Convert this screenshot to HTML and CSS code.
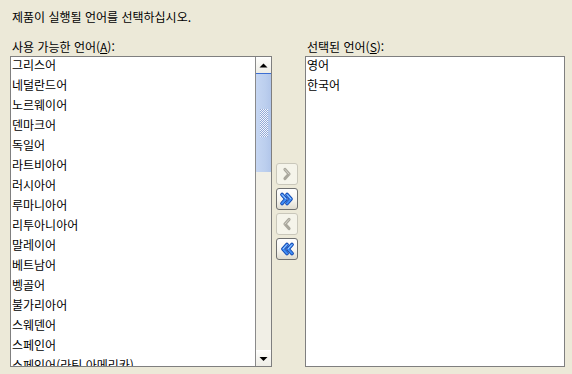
FILE: index.html
```html
<!DOCTYPE html>
<html lang="ko">
<head>
<meta charset="utf-8">
<link rel="stylesheet" href="styles.css">
</head>
<body>
<div class="page">
  <div class="prompt">제품이 실행될 언어를 선택하십시오.</div>
  <div class="panes">
    <div class="col left">
      <div class="label">사용 가능한 언어(<u>A</u>):</div>
      <div class="listbox">
        <ul class="items">
          <li>그리스어</li>
          <li>네덜란드어</li>
          <li>노르웨이어</li>
          <li>덴마크어</li>
          <li>독일어</li>
          <li>라트비아어</li>
          <li>러시아어</li>
          <li>루마니아어</li>
          <li>리투아니아어</li>
          <li>말레이어</li>
          <li>베트남어</li>
          <li>벵골어</li>
          <li>불가리아어</li>
          <li>스웨덴어</li>
          <li>스페인어</li>
          <li>스페인어(라틴 아메리카)</li>
        </ul>
        <div class="scrollbar">
          <div class="sb-btn">
            <svg width="15" height="15" viewBox="0 0 15 15"><polygon points="3.5,9.5 11.5,9.5 7.5,5.5" fill="#000"/></svg>
          </div>
          <div class="thumb"><div class="grip"></div></div>
          <div class="track"></div>
          <div class="sb-btn">
            <svg width="15" height="15" viewBox="0 0 15 15"><polygon points="3.5,6 11.5,6 7.5,10" fill="#000"/></svg>
          </div>
        </div>
      </div>
    </div>
    <div class="mid">
      <div class="mv-btn disabled">
        <svg width="20" height="20" viewBox="0 0 20 20"><polyline points="8,5.5 12,10 8,14.5" fill="none" stroke="#a9a79c" stroke-width="3.2" stroke-linecap="round" stroke-linejoin="round"/><polyline points="8,5.5 12,10" fill="none" stroke="#d6d4cb" stroke-width="1" stroke-linecap="round"/></svg>
      </div>
      <div class="mv-btn">
        <svg width="20" height="20" viewBox="0 0 20 20">
          <polyline points="5,5.5 9,10 5,14.5" fill="none" stroke="#0b3fa8" stroke-width="3.6" stroke-linecap="round" stroke-linejoin="round"/>
          <polyline points="10,5.5 14,10 10,14.5" fill="none" stroke="#0b3fa8" stroke-width="3.6" stroke-linecap="round" stroke-linejoin="round"/>
          <polyline points="5,5.5 9,10 5,14.5" fill="none" stroke="#3f8cf5" stroke-width="2" stroke-linecap="round" stroke-linejoin="round"/>
          <polyline points="10,5.5 14,10 10,14.5" fill="none" stroke="#3f8cf5" stroke-width="2" stroke-linecap="round" stroke-linejoin="round"/>
          <polyline points="5,5.5 9,10" fill="none" stroke="#bfe0ff" stroke-width="0.8"/>
          <polyline points="10,5.5 14,10" fill="none" stroke="#bfe0ff" stroke-width="0.8"/>
        </svg>
      </div>
      <div class="mv-btn disabled">
        <svg width="20" height="20" viewBox="0 0 20 20"><polyline points="12,5.5 8,10 12,14.5" fill="none" stroke="#a9a79c" stroke-width="3.2" stroke-linecap="round" stroke-linejoin="round"/><polyline points="12,5.5 8,10" fill="none" stroke="#d6d4cb" stroke-width="1" stroke-linecap="round"/></svg>
      </div>
      <div class="mv-btn">
        <svg width="20" height="20" viewBox="0 0 20 20">
          <polyline points="10,5.5 6,10 10,14.5" fill="none" stroke="#0b3fa8" stroke-width="3.6" stroke-linecap="round" stroke-linejoin="round"/>
          <polyline points="15,5.5 11,10 15,14.5" fill="none" stroke="#0b3fa8" stroke-width="3.6" stroke-linecap="round" stroke-linejoin="round"/>
          <polyline points="10,5.5 6,10 10,14.5" fill="none" stroke="#3f8cf5" stroke-width="2" stroke-linecap="round" stroke-linejoin="round"/>
          <polyline points="15,5.5 11,10 15,14.5" fill="none" stroke="#3f8cf5" stroke-width="2" stroke-linecap="round" stroke-linejoin="round"/>
          <polyline points="10,5.5 6,10" fill="none" stroke="#bfe0ff" stroke-width="0.8"/>
          <polyline points="15,5.5 11,10" fill="none" stroke="#bfe0ff" stroke-width="0.8"/>
        </svg>
      </div>
    </div>
    <div class="col right">
      <div class="label">선택된 언어(<u>S</u>):</div>
      <div class="listbox">
        <ul class="items">
          <li>영어</li>
          <li>한국어</li>
        </ul>
      </div>
    </div>
  </div>
</div>
</body>
</html>
```

FILE: styles.css
```css
html, body {
  margin: 0;
  background: #ece9d8;
}
body {
  font-family: "Noto Sans CJK KR", "Noto Sans", sans-serif;
  font-size: 12px;
  color: #000;
}
.page {
  padding: 10px 0 0 10px;
}
.prompt {
  height: 14px;
  line-height: 14px;
  padding-left: 2px;
  white-space: nowrap;
}
.panes {
  display: flex;
  margin-top: 16px;
}
.col {
  display: flex;
  flex-direction: column;
}
.left { width: 262px; }
.right { width: 260px; }
.label {
  height: 14px;
  line-height: 14px;
  padding-left: 2px;
  margin-bottom: 2px;
  white-space: nowrap;
}
.listbox {
  box-sizing: border-box;
  height: 311px;
  border: 1px solid #7f7f7f;
  background: #fff;
  display: flex;
  overflow: hidden;
}
.items {
  flex: 1;
  list-style: none;
  margin: 0;
  padding: 0 0 0 1px;
  overflow: hidden;
}
.items li {
  height: 20px;
  line-height: 16px;
  white-space: nowrap;
}
.scrollbar {
  width: 15px;
  border-left: 1px solid #8a8a8a;
  display: flex;
  flex-direction: column;
  background: #f1efe6;
}
.sb-btn {
  box-sizing: border-box;
  height: 16px;
  background: linear-gradient(#fdfdfb, #eeede6);
  border-top: 1px solid #fff;
  display: flex;
  align-items: center;
  justify-content: center;
}
.sb-btn svg { display: block; }
.thumb {
  box-sizing: border-box;
  height: 99px;
  border-top: 1px solid #3d6fd3;
  background: linear-gradient(90deg, #c6d6f2, #bccfee 60%, #b2c6ea);
  display: flex;
  align-items: center;
  justify-content: center;
}
.grip {
  width: 8px;
  height: 28px;
  background: repeating-conic-gradient(#f4f7fd 0 25%, #93aad6 0 50%) 0 0 / 2px 2px;
}
.track {
  flex: 1;
  background: #f1efe6;
}
.mid {
  width: 33px;
  box-sizing: border-box;
  padding: 16px 0 0 4px;
  display: flex;
  flex-direction: column;
  justify-content: center;
  gap: 3px;
}
.mv-btn {
  box-sizing: border-box;
  width: 22px;
  height: 22px;
  border: 1px solid #6f7070;
  border-radius: 3px;
  background: linear-gradient(#ffffff, #f6f5f0 55%, #dedbcf);
  display: flex;
  align-items: center;
  justify-content: center;
}
.mv-btn.disabled {
  border-color: #c9c7ba;
  background: #f5f4ea;
}
.mv-btn svg { display: block; }
```
